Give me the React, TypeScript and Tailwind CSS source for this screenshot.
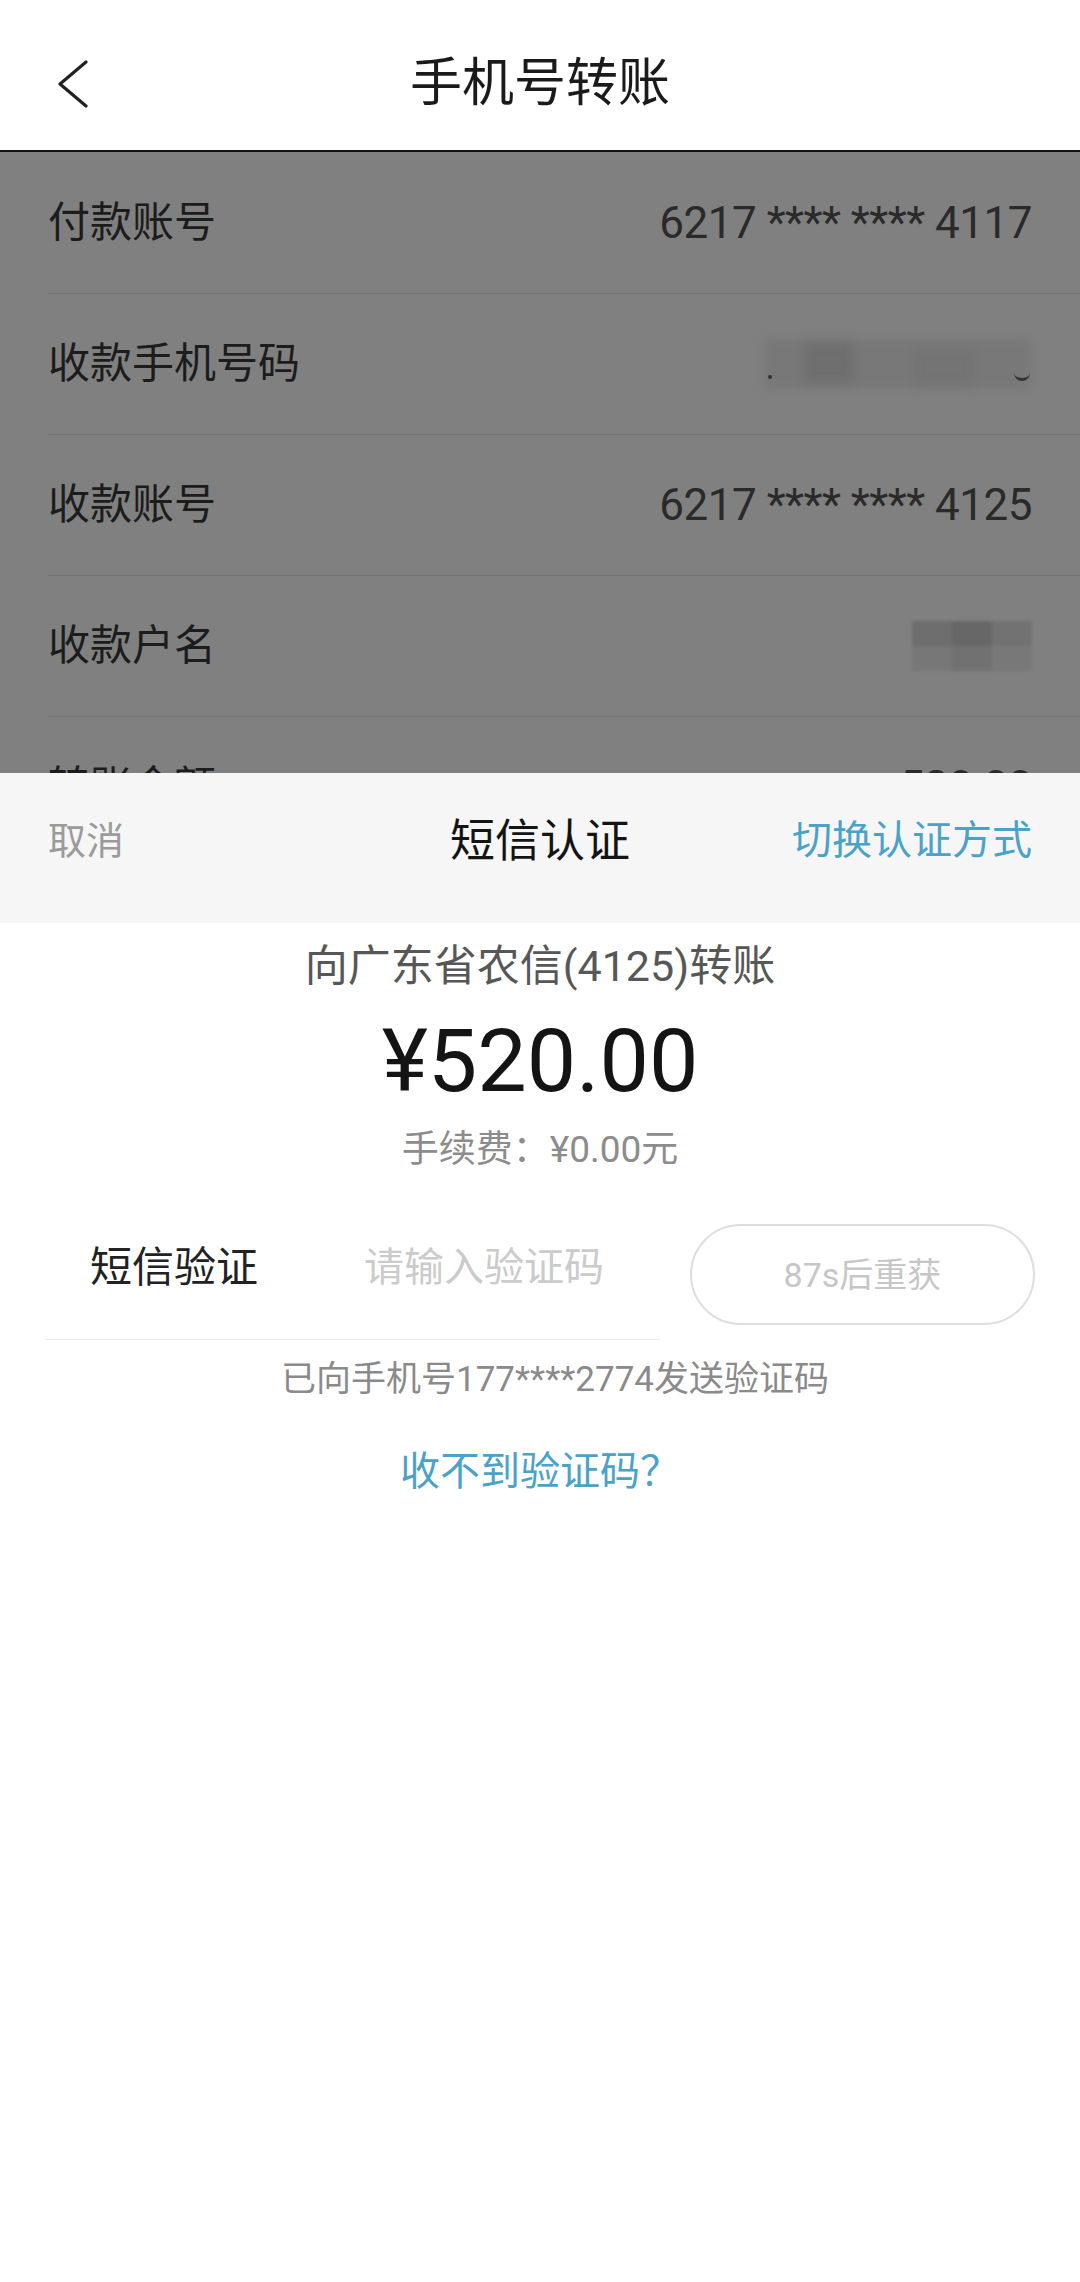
import React from "react";

const rows = [
  { label: "付款账号", value: "6217 **** **** 4117" },
  { label: "收款手机号码", value: "phone" },
  { label: "收款账号", value: "6217 **** **** 4125" },
  { label: "收款户名", value: "name" },
  { label: "转账金额", value: "520.00" },
];

function Masked({ kind }: { kind: string }) {
  if (kind === "phone") {
    return (
      <div className="h-[50px] w-[268px] relative">
        <div className="absolute inset-0 bg-[#787878] blur-[4px] rounded-sm" />
        <div className="absolute left-[40px] top-[4px] w-[50px] h-[40px] bg-[#6f6f6f] blur-[5px]" />
        <div className="absolute left-[150px] top-[10px] w-[60px] h-[36px] bg-[#747474] blur-[5px]" />
        <div className="absolute left-[4px] bottom-[10px] w-[4px] h-[4px] rounded-full bg-[#333]" />
        <div className="absolute right-[2px] bottom-[8px] w-[16px] h-[8px] border-b-[3px] border-[#333] rounded-b-full" />
      </div>
    );
  }
  if (kind === "name") {
    return (
      <div className="grid grid-cols-3 grid-rows-2 w-[120px] h-[50px] blur-[1.5px]">
        <div className="bg-[#6e6e6e]" />
        <div className="bg-[#676767]" />
        <div className="bg-[#727272]" />
        <div className="bg-[#777]" />
        <div className="bg-[#717171]" />
        <div className="bg-[#787878]" />
      </div>
    );
  }
  return <span>{kind}</span>;
}

export default function App() {
  return (
    <div className="w-[1080px] min-h-[2282px] bg-white font-['Roboto','Noto_Sans_CJK_SC',sans-serif]">
      {/* top bar */}
      <div className="h-[152px] border-b-[2px] border-[#111] flex items-center pt-[18px] relative">
        <svg className="absolute left-[56px] top-[60px]" width="34" height="48" viewBox="0 0 34 48" fill="none">
          <path d="M30 2 L4 24 L30 46" stroke="#222" strokeWidth="3.2" strokeLinecap="round" strokeLinejoin="round" />
        </svg>
        <div className="flex-1 text-center text-[52px] leading-none text-[#1a1a1a]">手机号转账</div>
      </div>

      {/* dimmed details behind the sheet */}
      <div className="h-[621px] bg-[#808080] overflow-hidden">
        {rows.map((r, i) => (
          <div key={i}>
            <div className={`${i === 0 ? "h-[141px]" : "h-[140px]"} px-[48px] flex items-center justify-between`}>
              <span className="text-[42px] leading-none text-[#1c1c1c]">{r.label}</span>
              {r.value === "phone" || r.value === "name" ? (
                <Masked kind={r.value} />
              ) : (
                <span className="text-[44px] leading-none text-[#2a2a2a] tracking-[-0.5px]">{r.value}</span>
              )}
            </div>
            <div className="ml-[48px] h-[1px] bg-[#777]" />
          </div>
        ))}
      </div>

      {/* sheet header */}
      <div className="h-[150px] bg-[#f6f6f6] px-[48px] pb-[14px] flex items-center justify-between">
        <span className="w-[240px] text-[38px] leading-none text-[#9b9b9b]">取消</span>
        <span className="text-[45px] leading-none text-[#141414]">短信认证</span>
        <span className="w-[240px] text-right text-[40px] leading-none text-[#4aa2c9]">切换认证方式</span>
      </div>

      {/* sheet body */}
      <div className="flex flex-col items-center">
        <div className="mt-[22px] text-[43px] leading-[43px] text-[#575757]">向广东省农信(4125)转账</div>
        <div className="mt-[29px] text-[88px] leading-[88px] text-[#141414]">¥520.00</div>
        <div className="mt-[26px] text-[37px] leading-[37px] text-[#8c8c8c]">手续费：¥0.00元</div>

        <div className="mt-[56px] w-full px-[45px] flex items-start">
          <div className="w-[615px] h-[116px] border-b border-[#ececec] pb-[28px] pl-[45px] flex items-center">
            <span className="w-[274px] text-[42px] leading-none text-[#222]">短信验证</span>
            <span className="text-[40px] leading-none text-[#cbcbcb]">请输入验证码</span>
          </div>
          <div className="ml-[30px] w-[345px] h-[101px] rounded-full border-[2px] border-[#dedede] flex items-center justify-center">
            <span className="text-[34px] leading-none text-[#c6c6c6]">87s后重获</span>
          </div>
        </div>

        <div className="mt-[22px] pl-[30px] text-[35px] leading-[35px] text-[#8a8a8a]">已向手机号177****2774发送验证码</div>
        <div className="mt-[55px] text-[40px] leading-[40px] text-[#4aa2c9]">收不到验证码？</div>
      </div>
    </div>
  );
}
